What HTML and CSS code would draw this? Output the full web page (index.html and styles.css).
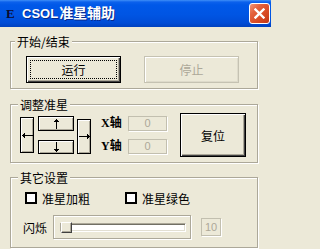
FILE: index.html
```html
<!DOCTYPE html>
<html lang="zh-CN">
<head>
<meta charset="utf-8">
<title>CSOL准星辅助</title>
<link rel="stylesheet" href="styles.css">
</head>
<body>
<div class="window">
  <div class="titlebar">
    <span class="app-icon">E</span>
    <span class="title"><span class="title-latin">CSOL</span>准星辅助</span>
    <button class="close-btn" aria-label="关闭">
      <svg width="11" height="11" viewBox="0 0 11 11"><path d="M1.5 1.5L9.5 9.5M9.5 1.5L1.5 9.5" stroke="#fff" stroke-width="2.4" stroke-linecap="square"/></svg>
    </button>
  </div>
  <div class="client">
    <fieldset class="group group-run">
      <legend class="legend legend-first">开始/结束</legend>
      <div class="run-row">
        <button class="btn btn-default">运行</button>
        <button class="btn btn-disabled" disabled>停止</button>
      </div>
    </fieldset>

    <fieldset class="group group-adjust">
      <legend class="legend">调整准星</legend>
      <div class="adjust-row">
        <button class="btn btn-arrow btn-side">
          <svg width="11" height="5" viewBox="0 0 11 5" shape-rendering="crispEdges"><path d="M1 2h10v1H1z M1 1h1v3H1z M2 0h1v5H2z M0 2h1v1H0z" fill="#000"/></svg>
        </button>
        <div class="arrow-col">
          <button class="btn btn-arrow btn-vert">
            <svg width="5" height="10" viewBox="0 0 5 10" shape-rendering="crispEdges"><path d="M2 0h1v10H2z M1 1h3v1H1z M0 2h5v1H0z" fill="#000"/></svg>
          </button>
          <button class="btn btn-arrow btn-vert btn-down">
            <svg width="5" height="10" viewBox="0 0 5 10" shape-rendering="crispEdges"><path d="M2 0h1v10H2z M1 8h3v1H1z M0 7h5v1H0z" fill="#000"/></svg>
          </button>
        </div>
        <button class="btn btn-arrow btn-side btn-right">
          <svg width="11" height="5" viewBox="0 0 11 5" shape-rendering="crispEdges"><path d="M0 2h10v1H0z M9 1h1v3H9z M8 0h1v5H8z M10 2h1v1h-1z" fill="#000"/></svg>
        </button>
        <div class="axis-grid">
          <span class="axis-label">X轴</span><span class="field">0</span>
          <span class="axis-label">Y轴</span><span class="field">0</span>
        </div>
        <button class="btn btn-reset">复位</button>
      </div>
    </fieldset>

    <fieldset class="group group-other">
      <legend class="legend">其它设置</legend>
      <div class="check-row">
        <label class="check"><span class="check-box"></span><span class="check-text">准星加粗</span></label>
        <label class="check check-second"><span class="check-box"></span><span class="check-text">准星绿色</span></label>
      </div>
      <div class="slider-row">
        <span class="slider-label">闪烁</span>
        <div class="slider-box">
          <div class="slider-track"><span class="slider-thumb"></span></div>
        </div>
        <span class="field field-value">10</span>
      </div>
    </fieldset>
  </div>
</div>
</body>
</html>
```

FILE: styles.css
```css
* {
  box-sizing: border-box;
}

html,
body {
  margin: 0;
  padding: 0;
}

body {
  width: 271px;
  height: 249px;
  overflow: hidden;
  background: #ECE9D8;
  color: #000;
  font-family: "Noto Sans CJK SC", "Noto Sans", sans-serif;
  font-size: 12px;
  line-height: 13px;
}

.window {
  display: flex;
  flex-direction: column;
  height: 249px;
}

/* ---------- title bar ---------- */
.titlebar {
  height: 27px;
  flex: none;
  display: flex;
  align-items: center;
  padding: 0 1px 0 6px;
  background: linear-gradient(#3F8FF7 0, #0C61EC 2px, #0058E8 5px, #0055E3 55%, #004CD6 85%, #0041BE 100%);
}

.app-icon {
  width: 9px;
  margin-right: 7px;
  font-family: "Liberation Serif", serif;
  font-weight: bold;
  font-size: 13px;
  line-height: 13px;
  color: #0B0B30;
}

.title {
  color: #fff;
  font-family: "Liberation Sans", "Noto Sans CJK SC", sans-serif;
  font-weight: bold;
  font-size: 14px;
  line-height: 16px;
  text-shadow: 1px 1px 0 #0A2A8C;
}

.title-latin {
  font-size: 13px;
  margin-right: 1px;
}

.close-btn {
  margin-left: auto;
  width: 21px;
  height: 21px;
  padding: 0;
  border: 1px solid #fff;
  border-radius: 3px;
  background: linear-gradient(135deg, #F2967A 0%, #E4623D 30%, #D84A24 65%, #C13718 100%);
  display: flex;
  align-items: center;
  justify-content: center;
}

.close-btn svg {
  display: block;
}

/* ---------- client area ---------- */
.client {
  padding-left: 10px;
  display: flex;
  flex-direction: column;
}

.group {
  width: 248px;
  margin: 0;
  padding: 0;
  min-width: 0;
  border: 1px solid #ACA899;
  box-shadow: inset 1px 1px 0 #fff, 1px 1px 0 #fff;
}

.group-run {
  margin-top: 8px;
}

.group-adjust {
  margin-top: 9px;
}

.group-other {
  margin-top: 8px;
}

.legend {
  padding: 0 2px;
  margin-left: 7px;
  line-height: 13px;
  background: #ECE9D8;
}

.legend-first {
  margin-left: 4px;
}

/* ---------- buttons ---------- */
.btn {
  font-family: "Noto Sans CJK SC", sans-serif;
  font-size: 12px;
  line-height: 13px;
  color: #000;
  background: #ECE9D8;
  padding: 0;
  margin: 0;
  border: 1px solid #000;
  box-shadow: inset 1px 1px 0 #fff, inset -1px -1px 0 #ACA899;
  display: flex;
  align-items: center;
  justify-content: center;
}

.btn-default {
  width: 95px;
  height: 27px;
  box-shadow: inset 1px 1px 0 #fff, inset -1px -1px 0 #404040, inset -2px -2px 0 #ACA899;
  outline: 1px dotted #000;
  outline-offset: -5px;
}

.btn-disabled {
  width: 95px;
  height: 27px;
  color: #ACA899;
  border-color: #C5C2B2;
  box-shadow: inset 1px 1px 0 #fff, inset -1px -1px 0 #DEDBCB;
}

.run-row {
  display: flex;
  gap: 23px;
  padding: 8px 0 5px 15px;
}

/* ---------- adjust group ---------- */
.adjust-row {
  display: flex;
  align-items: center;
  height: 44px;
  margin: 2px 0 5px;
  padding-left: 9px;
}

.btn-arrow svg {
  display: block;
}

.btn-side {
  width: 14px;
  height: 36px;
}

.btn-right {
  height: 35px;
  margin-left: 3px;
  margin-top: 3px;
}

.arrow-col {
  display: flex;
  flex-direction: column;
  gap: 9px;
  margin-left: 4px;
}

.btn-vert {
  width: 36px;
  height: 15px;
}

.btn-down {
  height: 14px;
}

.axis-grid {
  display: grid;
  grid-template-columns: 18px 39px;
  grid-auto-rows: 15px;
  column-gap: 9px;
  row-gap: 8px;
  margin-left: 10px;
  align-items: center;
}

.axis-label {
  font-weight: bold;
  white-space: nowrap;
  font-family: "Liberation Serif", "Noto Sans CJK SC", serif;
}

.field {
  height: 15px;
  border: 1px solid #C2BFAF;
  box-shadow: 1px 1px 0 #fff;
  color: #ACA899;
  font-family: "Liberation Sans", sans-serif;
  font-size: 11px;
  line-height: 13px;
  text-align: center;
}

.btn-reset {
  width: 66px;
  height: 44px;
  margin-left: 13px;
  box-shadow: inset 1px 1px 0 #fff, inset -1px -1px 0 #404040, inset -2px -2px 0 #ACA899;
}

/* ---------- other group ---------- */
.check-row {
  display: flex;
  align-items: center;
  height: 14px;
  margin-top: 7px;
  padding-left: 14px;
}

.check {
  display: flex;
  align-items: center;
  gap: 5px;
}

.check-second {
  margin-left: 35px;
}

.check-box {
  width: 12px;
  height: 12px;
  border: 2px solid #000;
  background: #fff;
}

.slider-row {
  display: flex;
  align-items: center;
  margin-top: 10px;
  margin-bottom: 8px;
  padding-left: 12px;
  height: 24px;
}

.slider-label {
  width: 24px;
}

.slider-box {
  margin-left: 6px;
  width: 138px;
  height: 24px;
  border: 1px solid #ACA899;
  box-shadow: inset 1px 1px 0 #fff, 1px 1px 0 #fff;
  display: flex;
  align-items: center;
  padding: 0 4px 0 6px;
}

.slider-track {
  flex: 1;
  height: 9px;
  background: #fff;
  border-top: 1px solid #ACA899;
  border-left: 1px solid #ACA899;
  border-bottom: 1px solid #fff;
  border-right: 1px solid #fff;
  box-shadow: inset 1px 1px 0 #716F64, inset -1px -1px 0 #E2DFD2;
  display: flex;
  align-items: center;
}

.slider-thumb {
  width: 11px;
  height: 11px;
  flex: none;
  margin-left: 0;
  background: #ECE9D8;
  border-top: 1px solid #fff;
  border-left: 1px solid #fff;
  border-right: 1px solid #404040;
  border-bottom: 1px solid #404040;
  box-shadow: inset -1px -1px 0 #ACA899;
}

.field-value {
  width: 20px;
  height: 18px;
  margin-left: 10px;
  line-height: 16px;
}
```
